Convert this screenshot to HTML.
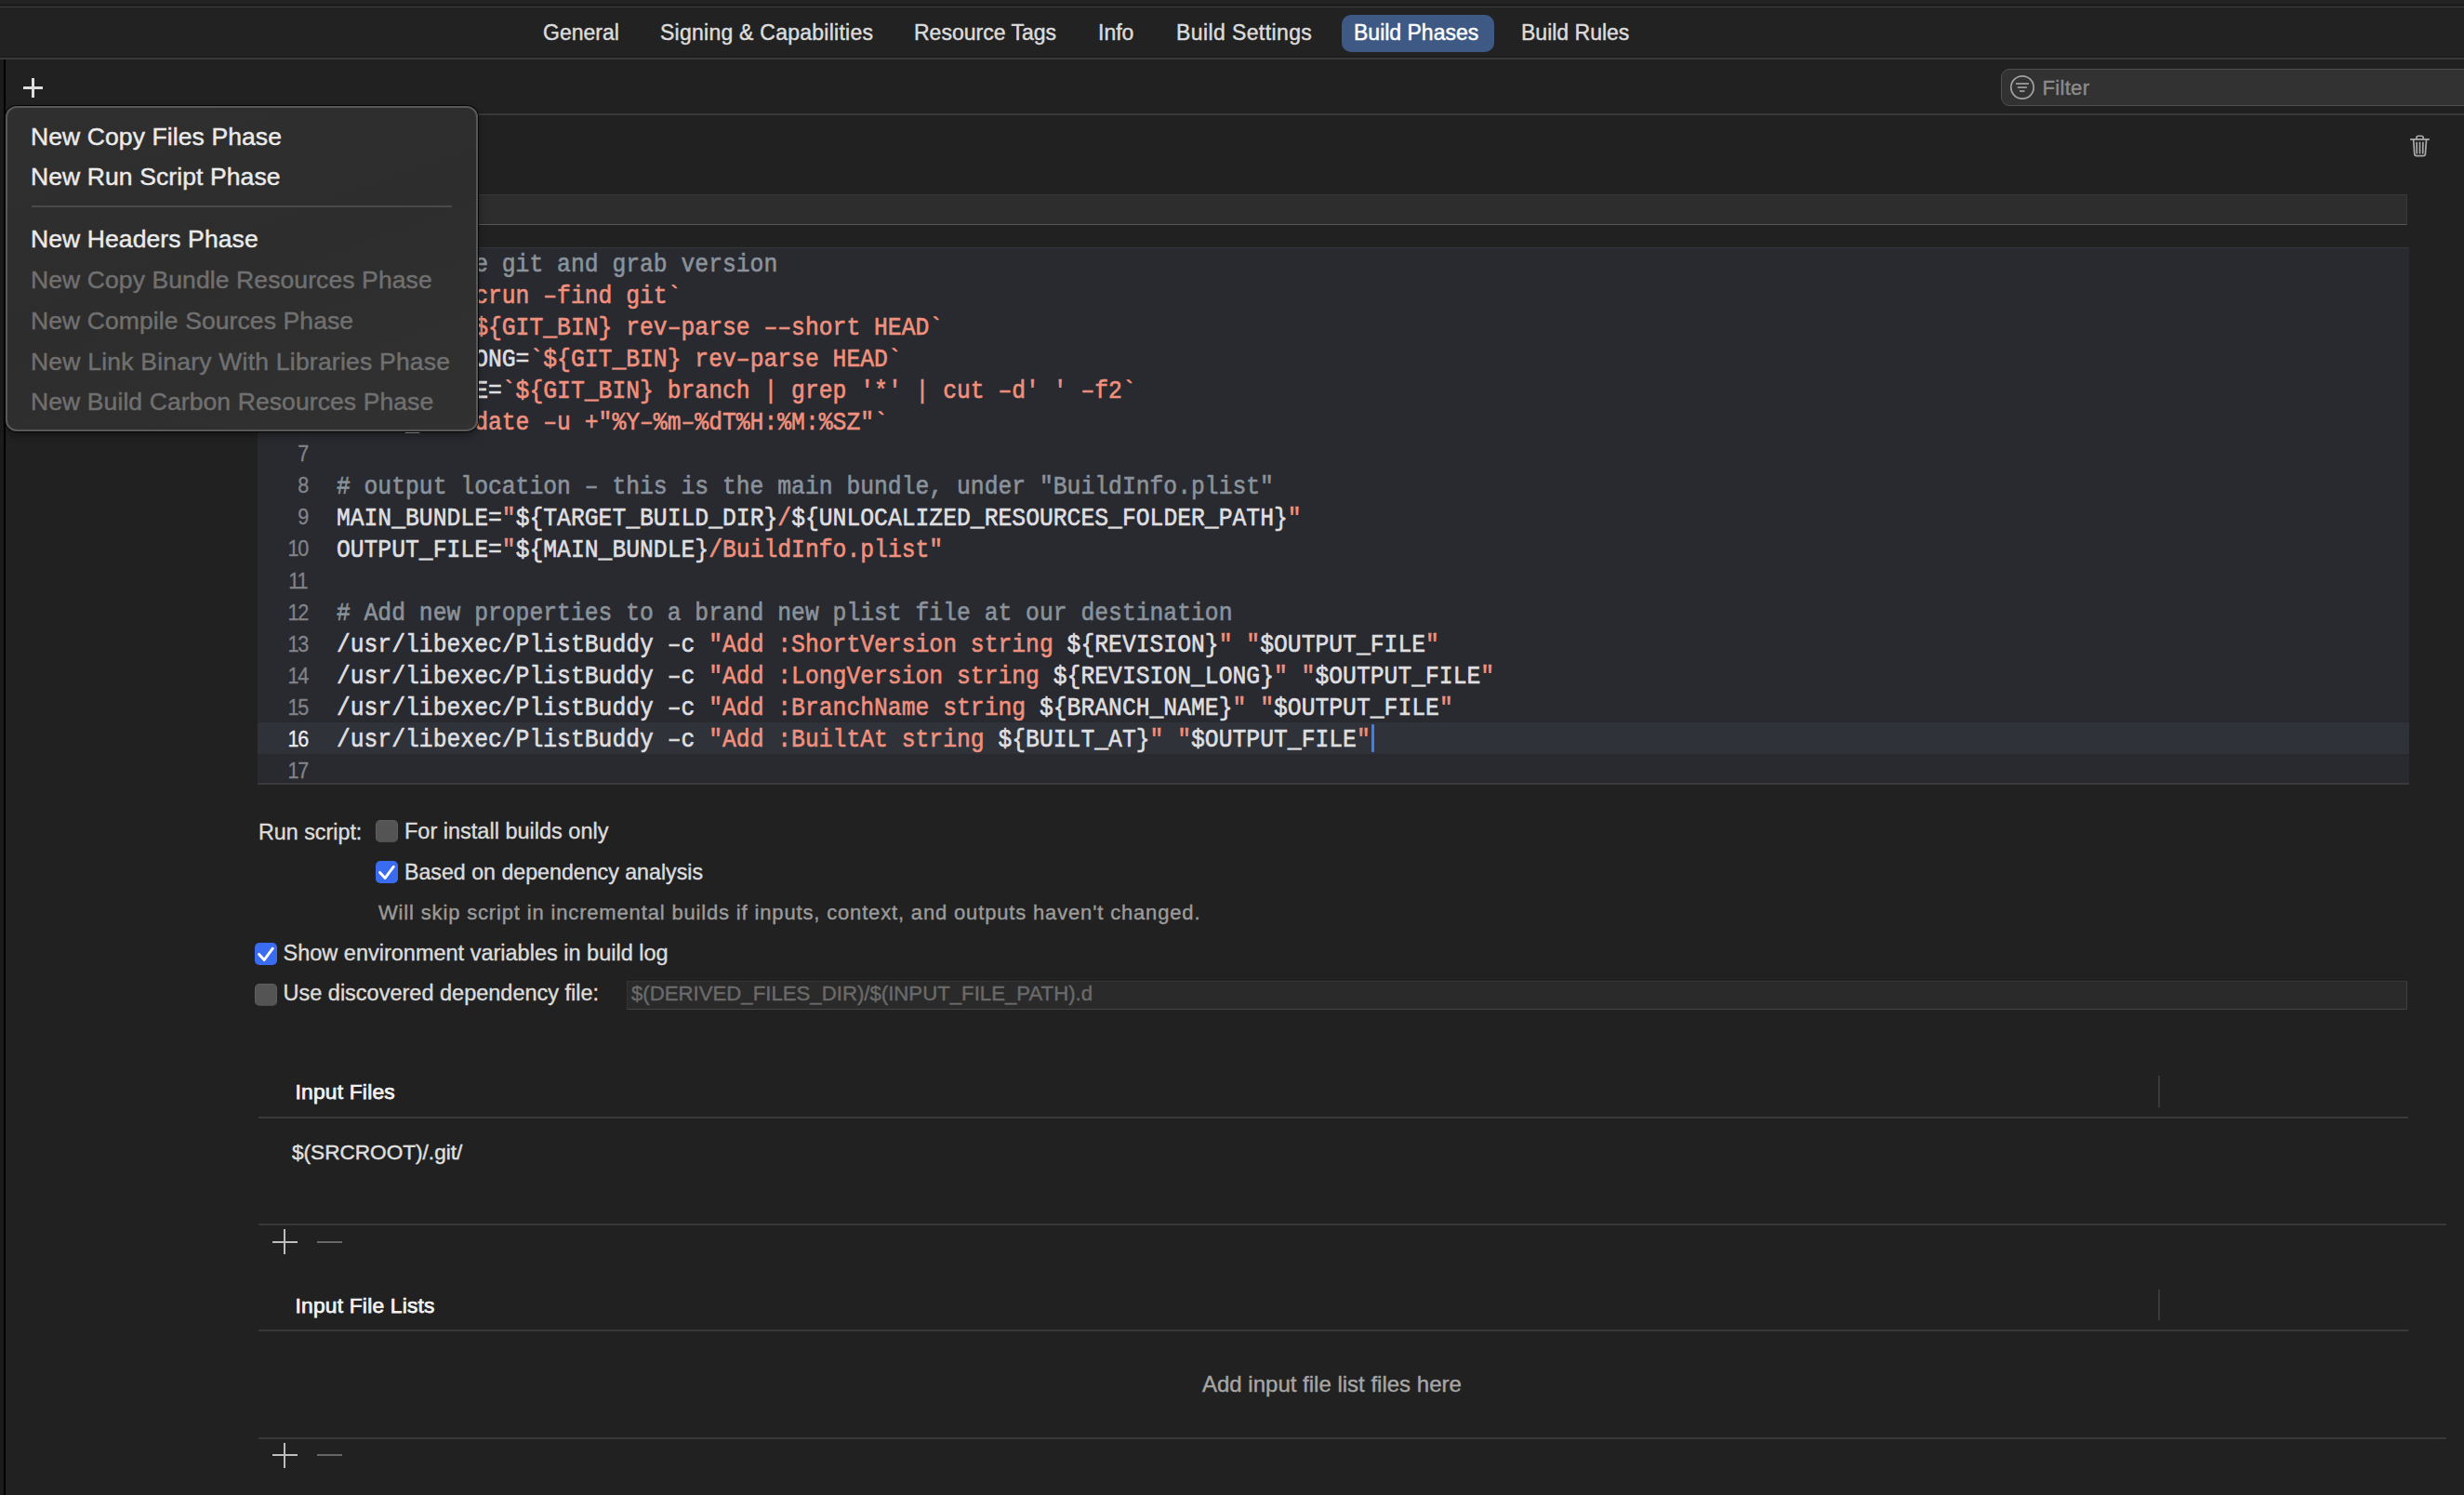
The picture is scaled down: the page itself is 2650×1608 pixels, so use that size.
<!DOCTYPE html>
<html><head><meta charset="utf-8"><style>
html,body{margin:0;padding:0;}
body{width:2650px;height:1608px;position:relative;overflow:hidden;background:#212121;font-family:'Liberation Sans', sans-serif;}
</style></head><body>
<div style="position:absolute;left:0px;top:0px;width:2650px;height:4px;background:#232323"></div>
<div style="position:absolute;left:0px;top:4px;width:2650px;height:3px;background:#1d1d1d"></div>
<div style="position:absolute;left:0px;top:7px;width:2650px;height:1.2px;background:#3e3e3e"></div>
<div style="position:absolute;left:0px;top:8px;width:2650px;height:54px;background:#222222"></div>
<div style="position:absolute;left:0px;top:60px;width:2650px;height:2px;background:#1f1f1f"></div>
<div style="position:absolute;left:0px;top:62px;width:2650px;height:2px;background:#393939"></div>
<div style="position:absolute;left:0px;top:64px;width:4px;height:1544px;background:#1c1c1c"></div>
<div style="position:absolute;left:4px;top:64px;width:2px;height:1544px;background:#000"></div>
<div style="position:absolute;left:6px;top:122px;width:2644px;height:2px;background:#393939"></div>
<div style="position:absolute;left:1443px;top:16px;width:164px;height:40px;background:#3e5a84;border-radius:10px"></div>
<div style="position:absolute;left:584px;top:20.03px;height:30px;line-height:30px;font-family:'Liberation Sans', sans-serif;font-size:23px;font-weight:400;color:#dcdcdc;white-space:pre;-webkit-text-stroke:0.45px currentColor;letter-spacing:0px;">General</div>
<div style="position:absolute;left:710px;top:20.03px;height:30px;line-height:30px;font-family:'Liberation Sans', sans-serif;font-size:23px;font-weight:400;color:#dcdcdc;white-space:pre;-webkit-text-stroke:0.45px currentColor;letter-spacing:0.25px;">Signing &amp; Capabilities</div>
<div style="position:absolute;left:983px;top:20.03px;height:30px;line-height:30px;font-family:'Liberation Sans', sans-serif;font-size:23px;font-weight:400;color:#dcdcdc;white-space:pre;-webkit-text-stroke:0.45px currentColor;letter-spacing:0px;">Resource Tags</div>
<div style="position:absolute;left:1181px;top:20.03px;height:30px;line-height:30px;font-family:'Liberation Sans', sans-serif;font-size:23px;font-weight:400;color:#dcdcdc;white-space:pre;-webkit-text-stroke:0.45px currentColor;letter-spacing:0px;">Info</div>
<div style="position:absolute;left:1265px;top:20.03px;height:30px;line-height:30px;font-family:'Liberation Sans', sans-serif;font-size:23px;font-weight:400;color:#dcdcdc;white-space:pre;-webkit-text-stroke:0.45px currentColor;letter-spacing:0.4px;">Build Settings</div>
<div style="position:absolute;left:1456px;top:20.03px;height:30px;line-height:30px;font-family:'Liberation Sans', sans-serif;font-size:23px;font-weight:400;color:#ffffff;white-space:pre;-webkit-text-stroke:0.45px currentColor;letter-spacing:0px;">Build Phases</div>
<div style="position:absolute;left:1636px;top:20.03px;height:30px;line-height:30px;font-family:'Liberation Sans', sans-serif;font-size:23px;font-weight:400;color:#dcdcdc;white-space:pre;-webkit-text-stroke:0.45px currentColor;letter-spacing:0px;">Build Rules</div>
<div style="position:absolute;left:24.5px;top:93.3px;width:21.5px;height:2.4px;background:#dedede"></div>
<div style="position:absolute;left:34.3px;top:84px;width:2.4px;height:21px;background:#dedede"></div>
<div style="position:absolute;left:2152px;top:74px;width:520px;height:40px;box-sizing:border-box;background:#323232;border:1.5px solid #4f4f4f;border-radius:9px"></div>
<svg style="position:absolute;left:2160px;top:79px" width="30" height="30" viewBox="0 0 30 30">
<circle cx="15" cy="15" r="12.2" fill="none" stroke="#a2a2a2" stroke-width="1.7"/>
<line x1="8" y1="11" x2="22" y2="11" stroke="#a2a2a2" stroke-width="1.7"/>
<line x1="9.8" y1="15" x2="19.8" y2="15" stroke="#a2a2a2" stroke-width="1.7"/>
<line x1="12" y1="19" x2="17.5" y2="19" stroke="#a2a2a2" stroke-width="1.7"/>
</svg>
<div style="position:absolute;left:2196.5px;top:80.10px;height:29px;line-height:29px;font-family:'Liberation Sans', sans-serif;font-size:22.2px;font-weight:400;color:#8c8c8c;white-space:pre;-webkit-text-stroke:0.4px currentColor;letter-spacing:0.25px;">Filter</div>
<svg style="position:absolute;left:2588px;top:142px" width="30" height="30" viewBox="0 0 30 30">
<g fill="none" stroke="#a9a9a9" stroke-width="1.7" stroke-linecap="round" stroke-linejoin="round">
<line x1="4.8" y1="7.9" x2="24.2" y2="7.9"/>
<path d="M10.9 7.6 V6.3 Q10.9 4.25 12.9 4.25 H16.2 Q18.2 4.25 18.2 6.3 V7.6"/>
<path d="M7.65 8.3 L8.75 23.6 Q8.9 25.55 10.9 25.55 H18.3 Q20.25 25.55 20.4 23.6 L21.55 8.3"/>
<line x1="11.1" y1="11.3" x2="11.3" y2="22.8"/>
<line x1="14.5" y1="11.3" x2="14.5" y2="22.8"/>
<line x1="17.9" y1="11.3" x2="17.7" y2="22.8"/>
</g></svg>
<div style="position:absolute;left:400px;top:209px;width:2189px;height:33px;box-sizing:border-box;background:#2d2d2d;border:1px solid #383838;border-bottom:1.5px solid #575757"></div>
<div style="position:absolute;left:277px;top:266px;width:2314px;height:578px;background:#292a30;box-sizing:border-box;border-top:1px solid #34353a;border-bottom:2px solid #3a3a3d"></div>
<div style="position:absolute;left:277px;top:776.5000000000001px;width:2314px;height:34.7px;background:#2f3239"></div>
<div style="position:absolute;right:2319.2px;top:267.58px;height:31px;line-height:31px;font-family:'Liberation Sans', sans-serif;font-size:24px;font-weight:400;color:#838387;white-space:pre;-webkit-text-stroke:0.3px currentColor;letter-spacing:-1.2px;transform:scaleX(0.9);transform-origin:100% 50%;">1</div>
<div style="position:absolute;left:361.9px;top:268.82px;height:32px;line-height:32px;font-family:'Liberation Mono', monospace;font-size:24.71px;font-weight:400;color:#dfdfe0;white-space:pre;-webkit-text-stroke:0.55px currentColor;transform:scaleY(1.14);transform-origin:0 22.58px;"><span style="color:#8a939b"># Determine git and grab version</span></div>
<div style="position:absolute;right:2319.2px;top:301.68px;height:31px;line-height:31px;font-family:'Liberation Sans', sans-serif;font-size:24px;font-weight:400;color:#838387;white-space:pre;-webkit-text-stroke:0.3px currentColor;letter-spacing:-1.2px;transform:scaleX(0.9);transform-origin:100% 50%;">2</div>
<div style="position:absolute;left:361.9px;top:302.92px;height:32px;line-height:32px;font-family:'Liberation Mono', monospace;font-size:24.71px;font-weight:400;color:#dfdfe0;white-space:pre;-webkit-text-stroke:0.55px currentColor;transform:scaleY(1.14);transform-origin:0 22.58px;"><span style="color:#dfdfe0">GIT_BIN=</span><span style="color:#f0917f">`xcrun &#8211;find git`</span></div>
<div style="position:absolute;right:2319.2px;top:335.78px;height:31px;line-height:31px;font-family:'Liberation Sans', sans-serif;font-size:24px;font-weight:400;color:#838387;white-space:pre;-webkit-text-stroke:0.3px currentColor;letter-spacing:-1.2px;transform:scaleX(0.9);transform-origin:100% 50%;">3</div>
<div style="position:absolute;left:361.9px;top:337.02px;height:32px;line-height:32px;font-family:'Liberation Mono', monospace;font-size:24.71px;font-weight:400;color:#dfdfe0;white-space:pre;-webkit-text-stroke:0.55px currentColor;transform:scaleY(1.14);transform-origin:0 22.58px;"><span style="color:#dfdfe0">REVISION=</span><span style="color:#f0917f">`${GIT_BIN} rev&#8211;parse &#8211;&#8211;short HEAD`</span></div>
<div style="position:absolute;right:2319.2px;top:369.88px;height:31px;line-height:31px;font-family:'Liberation Sans', sans-serif;font-size:24px;font-weight:400;color:#838387;white-space:pre;-webkit-text-stroke:0.3px currentColor;letter-spacing:-1.2px;transform:scaleX(0.9);transform-origin:100% 50%;">4</div>
<div style="position:absolute;left:361.9px;top:371.12px;height:32px;line-height:32px;font-family:'Liberation Mono', monospace;font-size:24.71px;font-weight:400;color:#dfdfe0;white-space:pre;-webkit-text-stroke:0.55px currentColor;transform:scaleY(1.14);transform-origin:0 22.58px;"><span style="color:#dfdfe0">REVISION_LONG=</span><span style="color:#f0917f">`${GIT_BIN} rev&#8211;parse HEAD`</span></div>
<div style="position:absolute;right:2319.2px;top:403.98px;height:31px;line-height:31px;font-family:'Liberation Sans', sans-serif;font-size:24px;font-weight:400;color:#838387;white-space:pre;-webkit-text-stroke:0.3px currentColor;letter-spacing:-1.2px;transform:scaleX(0.9);transform-origin:100% 50%;">5</div>
<div style="position:absolute;left:361.9px;top:405.22px;height:32px;line-height:32px;font-family:'Liberation Mono', monospace;font-size:24.71px;font-weight:400;color:#dfdfe0;white-space:pre;-webkit-text-stroke:0.55px currentColor;transform:scaleY(1.14);transform-origin:0 22.58px;"><span style="color:#dfdfe0">BRANCH_NAME=</span><span style="color:#f0917f">`${GIT_BIN} branch | grep &#x27;*&#x27; | cut &#8211;d&#x27; &#x27; &#8211;f2`</span></div>
<div style="position:absolute;right:2319.2px;top:438.08px;height:31px;line-height:31px;font-family:'Liberation Sans', sans-serif;font-size:24px;font-weight:400;color:#838387;white-space:pre;-webkit-text-stroke:0.3px currentColor;letter-spacing:-1.2px;transform:scaleX(0.9);transform-origin:100% 50%;">6</div>
<div style="position:absolute;left:361.9px;top:439.32px;height:32px;line-height:32px;font-family:'Liberation Mono', monospace;font-size:24.71px;font-weight:400;color:#dfdfe0;white-space:pre;-webkit-text-stroke:0.55px currentColor;transform:scaleY(1.14);transform-origin:0 22.58px;"><span style="color:#dfdfe0">BUILT_AT=</span><span style="color:#f0917f">`date &#8211;u +&quot;%Y&#8211;%m&#8211;%dT%H:%M:%SZ&quot;`</span></div>
<div style="position:absolute;right:2319.2px;top:472.18px;height:31px;line-height:31px;font-family:'Liberation Sans', sans-serif;font-size:24px;font-weight:400;color:#838387;white-space:pre;-webkit-text-stroke:0.3px currentColor;letter-spacing:-1.2px;transform:scaleX(0.9);transform-origin:100% 50%;">7</div>
<div style="position:absolute;right:2319.2px;top:506.28px;height:31px;line-height:31px;font-family:'Liberation Sans', sans-serif;font-size:24px;font-weight:400;color:#838387;white-space:pre;-webkit-text-stroke:0.3px currentColor;letter-spacing:-1.2px;transform:scaleX(0.9);transform-origin:100% 50%;">8</div>
<div style="position:absolute;left:361.9px;top:507.52px;height:32px;line-height:32px;font-family:'Liberation Mono', monospace;font-size:24.71px;font-weight:400;color:#dfdfe0;white-space:pre;-webkit-text-stroke:0.55px currentColor;transform:scaleY(1.14);transform-origin:0 22.58px;"><span style="color:#8a939b"># output location &#8211; this is the main bundle, under &quot;BuildInfo.plist&quot;</span></div>
<div style="position:absolute;right:2319.2px;top:540.38px;height:31px;line-height:31px;font-family:'Liberation Sans', sans-serif;font-size:24px;font-weight:400;color:#838387;white-space:pre;-webkit-text-stroke:0.3px currentColor;letter-spacing:-1.2px;transform:scaleX(0.9);transform-origin:100% 50%;">9</div>
<div style="position:absolute;left:361.9px;top:541.62px;height:32px;line-height:32px;font-family:'Liberation Mono', monospace;font-size:24.71px;font-weight:400;color:#dfdfe0;white-space:pre;-webkit-text-stroke:0.55px currentColor;transform:scaleY(1.14);transform-origin:0 22.58px;"><span style="color:#dfdfe0">MAIN_BUNDLE=</span><span style="color:#f0917f">&quot;</span><span style="color:#dfdfe0">${TARGET_BUILD_DIR}</span><span style="color:#f0917f">/</span><span style="color:#dfdfe0">${UNLOCALIZED_RESOURCES_FOLDER_PATH}</span><span style="color:#f0917f">&quot;</span></div>
<div style="position:absolute;right:2319.2px;top:574.48px;height:31px;line-height:31px;font-family:'Liberation Sans', sans-serif;font-size:24px;font-weight:400;color:#838387;white-space:pre;-webkit-text-stroke:0.3px currentColor;letter-spacing:-1.2px;transform:scaleX(0.9);transform-origin:100% 50%;">10</div>
<div style="position:absolute;left:361.9px;top:575.72px;height:32px;line-height:32px;font-family:'Liberation Mono', monospace;font-size:24.71px;font-weight:400;color:#dfdfe0;white-space:pre;-webkit-text-stroke:0.55px currentColor;transform:scaleY(1.14);transform-origin:0 22.58px;"><span style="color:#dfdfe0">OUTPUT_FILE=</span><span style="color:#f0917f">&quot;</span><span style="color:#dfdfe0">${MAIN_BUNDLE}</span><span style="color:#f0917f">/BuildInfo.plist&quot;</span></div>
<div style="position:absolute;right:2319.2px;top:608.58px;height:31px;line-height:31px;font-family:'Liberation Sans', sans-serif;font-size:24px;font-weight:400;color:#838387;white-space:pre;-webkit-text-stroke:0.3px currentColor;letter-spacing:-1.2px;transform:scaleX(0.9);transform-origin:100% 50%;">11</div>
<div style="position:absolute;right:2319.2px;top:642.68px;height:31px;line-height:31px;font-family:'Liberation Sans', sans-serif;font-size:24px;font-weight:400;color:#838387;white-space:pre;-webkit-text-stroke:0.3px currentColor;letter-spacing:-1.2px;transform:scaleX(0.9);transform-origin:100% 50%;">12</div>
<div style="position:absolute;left:361.9px;top:643.92px;height:32px;line-height:32px;font-family:'Liberation Mono', monospace;font-size:24.71px;font-weight:400;color:#dfdfe0;white-space:pre;-webkit-text-stroke:0.55px currentColor;transform:scaleY(1.14);transform-origin:0 22.58px;"><span style="color:#8a939b"># Add new properties to a brand new plist file at our destination</span></div>
<div style="position:absolute;right:2319.2px;top:676.78px;height:31px;line-height:31px;font-family:'Liberation Sans', sans-serif;font-size:24px;font-weight:400;color:#838387;white-space:pre;-webkit-text-stroke:0.3px currentColor;letter-spacing:-1.2px;transform:scaleX(0.9);transform-origin:100% 50%;">13</div>
<div style="position:absolute;left:361.9px;top:678.02px;height:32px;line-height:32px;font-family:'Liberation Mono', monospace;font-size:24.71px;font-weight:400;color:#dfdfe0;white-space:pre;-webkit-text-stroke:0.55px currentColor;transform:scaleY(1.14);transform-origin:0 22.58px;"><span style="color:#dfdfe0">/usr/libexec/PlistBuddy &#8211;c </span><span style="color:#f0917f">&quot;Add :ShortVersion string </span><span style="color:#dfdfe0">${REVISION}</span><span style="color:#f0917f">&quot; &quot;</span><span style="color:#dfdfe0">$OUTPUT_FILE</span><span style="color:#f0917f">&quot;</span></div>
<div style="position:absolute;right:2319.2px;top:710.88px;height:31px;line-height:31px;font-family:'Liberation Sans', sans-serif;font-size:24px;font-weight:400;color:#838387;white-space:pre;-webkit-text-stroke:0.3px currentColor;letter-spacing:-1.2px;transform:scaleX(0.9);transform-origin:100% 50%;">14</div>
<div style="position:absolute;left:361.9px;top:712.12px;height:32px;line-height:32px;font-family:'Liberation Mono', monospace;font-size:24.71px;font-weight:400;color:#dfdfe0;white-space:pre;-webkit-text-stroke:0.55px currentColor;transform:scaleY(1.14);transform-origin:0 22.58px;"><span style="color:#dfdfe0">/usr/libexec/PlistBuddy &#8211;c </span><span style="color:#f0917f">&quot;Add :LongVersion string </span><span style="color:#dfdfe0">${REVISION_LONG}</span><span style="color:#f0917f">&quot; &quot;</span><span style="color:#dfdfe0">$OUTPUT_FILE</span><span style="color:#f0917f">&quot;</span></div>
<div style="position:absolute;right:2319.2px;top:744.98px;height:31px;line-height:31px;font-family:'Liberation Sans', sans-serif;font-size:24px;font-weight:400;color:#838387;white-space:pre;-webkit-text-stroke:0.3px currentColor;letter-spacing:-1.2px;transform:scaleX(0.9);transform-origin:100% 50%;">15</div>
<div style="position:absolute;left:361.9px;top:746.22px;height:32px;line-height:32px;font-family:'Liberation Mono', monospace;font-size:24.71px;font-weight:400;color:#dfdfe0;white-space:pre;-webkit-text-stroke:0.55px currentColor;transform:scaleY(1.14);transform-origin:0 22.58px;"><span style="color:#dfdfe0">/usr/libexec/PlistBuddy &#8211;c </span><span style="color:#f0917f">&quot;Add :BranchName string </span><span style="color:#dfdfe0">${BRANCH_NAME}</span><span style="color:#f0917f">&quot; &quot;</span><span style="color:#dfdfe0">$OUTPUT_FILE</span><span style="color:#f0917f">&quot;</span></div>
<div style="position:absolute;right:2319.2px;top:779.08px;height:31px;line-height:31px;font-family:'Liberation Sans', sans-serif;font-size:24px;font-weight:400;color:#ececec;white-space:pre;-webkit-text-stroke:0.3px currentColor;letter-spacing:-1.2px;transform:scaleX(0.9);transform-origin:100% 50%;">16</div>
<div style="position:absolute;left:361.9px;top:780.32px;height:32px;line-height:32px;font-family:'Liberation Mono', monospace;font-size:24.71px;font-weight:400;color:#dfdfe0;white-space:pre;-webkit-text-stroke:0.55px currentColor;transform:scaleY(1.14);transform-origin:0 22.58px;"><span style="color:#dfdfe0">/usr/libexec/PlistBuddy &#8211;c </span><span style="color:#f0917f">&quot;Add :BuiltAt string </span><span style="color:#dfdfe0">${BUILT_AT}</span><span style="color:#f0917f">&quot; &quot;</span><span style="color:#dfdfe0">$OUTPUT_FILE</span><span style="color:#f0917f">&quot;</span></div>
<div style="position:absolute;right:2319.2px;top:813.18px;height:31px;line-height:31px;font-family:'Liberation Sans', sans-serif;font-size:24px;font-weight:400;color:#838387;white-space:pre;-webkit-text-stroke:0.3px currentColor;letter-spacing:-1.2px;transform:scaleX(0.9);transform-origin:100% 50%;">17</div>
<div style="position:absolute;left:1474.5px;top:779px;width:3px;height:30px;background:#3f7ff6;border-radius:1px"></div>
<div style="position:absolute;left:278px;top:879.52px;height:30px;line-height:30px;font-family:'Liberation Sans', sans-serif;font-size:23.3px;font-weight:400;color:#dcdcdc;white-space:pre;-webkit-text-stroke:0.4px currentColor;">Run script:</div>
<div style="position:absolute;left:404px;top:882px;width:24px;height:24px;box-sizing:border-box;border-radius:5px;background:#545454;border:1px solid #5e5e5e;border-bottom-color:#4c4c4c"></div>
<div style="position:absolute;left:435px;top:878.95px;height:31px;line-height:31px;font-family:'Liberation Sans', sans-serif;font-size:23.5px;font-weight:400;color:#dcdcdc;white-space:pre;-webkit-text-stroke:0.4px currentColor;">For install builds only</div>
<div style="position:absolute;left:404px;top:926px;width:24px;height:24px;border-radius:5px;background:#3a6cf2"></div>
<svg style="position:absolute;left:404px;top:926px" width="24" height="24" viewBox="0 0 24 24"><path d="M4.6 12.4 L10.2 18.4 L19.3 6.2" fill="none" stroke="#ffffff" stroke-width="2.9" stroke-linecap="round" stroke-linejoin="round"/></svg>
<div style="position:absolute;left:435px;top:922.66px;height:30px;line-height:30px;font-family:'Liberation Sans', sans-serif;font-size:23.2px;font-weight:400;color:#dcdcdc;white-space:pre;-webkit-text-stroke:0.4px currentColor;">Based on dependency analysis</div>
<div style="position:absolute;left:407px;top:966.87px;height:29px;line-height:29px;font-family:'Liberation Sans', sans-serif;font-size:22px;font-weight:400;color:#9b9b9b;white-space:pre;-webkit-text-stroke:0.4px currentColor;letter-spacing:0.84px;">Will skip script in incremental builds if inputs, context, and outputs haven&#x27;t changed.</div>
<div style="position:absolute;left:274px;top:1014px;width:24px;height:24px;border-radius:5px;background:#3a6cf2"></div>
<svg style="position:absolute;left:274px;top:1014px" width="24" height="24" viewBox="0 0 24 24"><path d="M4.6 12.4 L10.2 18.4 L19.3 6.2" fill="none" stroke="#ffffff" stroke-width="2.9" stroke-linecap="round" stroke-linejoin="round"/></svg>
<div style="position:absolute;left:304.5px;top:1009.75px;height:31px;line-height:31px;font-family:'Liberation Sans', sans-serif;font-size:23.5px;font-weight:400;color:#dcdcdc;white-space:pre;-webkit-text-stroke:0.4px currentColor;">Show environment variables in build log</div>
<div style="position:absolute;left:274px;top:1058px;width:24px;height:24px;box-sizing:border-box;border-radius:5px;background:#545454;border:1px solid #5e5e5e;border-bottom-color:#4c4c4c"></div>
<div style="position:absolute;left:304.5px;top:1053.05px;height:31px;line-height:31px;font-family:'Liberation Sans', sans-serif;font-size:23.5px;font-weight:400;color:#dcdcdc;white-space:pre;-webkit-text-stroke:0.4px currentColor;">Use discovered dependency file:</div>
<div style="position:absolute;left:674px;top:1054.5px;width:1915px;height:31.5px;box-sizing:border-box;background:#2a2a2a;border:1px solid #353535;border-right-color:#3e3e3e;border-bottom:1.5px solid #444444"></div>
<div style="position:absolute;left:679px;top:1054.30px;height:29px;line-height:29px;font-family:'Liberation Sans', sans-serif;font-size:22.2px;font-weight:400;color:#6a6a6a;white-space:pre;-webkit-text-stroke:0.4px currentColor;">$(DERIVED_FILES_DIR)/$(INPUT_FILE_PATH).d</div>
<div style="position:absolute;left:317.5px;top:1159.00px;height:30px;line-height:30px;font-family:'Liberation Sans', sans-serif;font-size:22.8px;font-weight:400;color:#f2f2f2;white-space:pre;-webkit-text-stroke:0.75px currentColor;letter-spacing:0.2px;">Input Files</div>
<div style="position:absolute;left:2321px;top:1157px;width:2px;height:34px;background:#3a3a3a"></div>
<div style="position:absolute;left:278px;top:1200.5px;width:2312px;height:2px;background:#393939"></div>
<div style="position:absolute;left:314px;top:1224.56px;height:29px;line-height:29px;font-family:'Liberation Sans', sans-serif;font-size:22.6px;font-weight:400;color:#e0e0e0;white-space:pre;-webkit-text-stroke:0.4px currentColor;">$(SRCROOT)/.git/</div>
<div style="position:absolute;left:278px;top:1315.5px;width:2353px;height:2px;background:#393939"></div>
<div style="position:absolute;left:292.8px;top:1334.5px;width:27px;height:2.4px;background:#bdbdbd"></div>
<div style="position:absolute;left:305px;top:1322.4px;width:2.4px;height:26.6px;background:#bdbdbd"></div>
<div style="position:absolute;left:341.3px;top:1334.5px;width:26.6px;height:2.4px;background:#666666"></div>
<div style="position:absolute;left:317.5px;top:1389.00px;height:30px;line-height:30px;font-family:'Liberation Sans', sans-serif;font-size:22.8px;font-weight:400;color:#f2f2f2;white-space:pre;-webkit-text-stroke:0.75px currentColor;letter-spacing:0.2px;">Input File Lists</div>
<div style="position:absolute;left:2321px;top:1387px;width:2px;height:33px;background:#3a3a3a"></div>
<div style="position:absolute;left:278px;top:1429.5px;width:2312px;height:2px;background:#393939"></div>
<div style="position:absolute;left:1293px;top:1472.93px;height:31px;line-height:31px;font-family:'Liberation Sans', sans-serif;font-size:24px;font-weight:400;color:#a6a6a6;white-space:pre;-webkit-text-stroke:0.4px currentColor;">Add input file list files here</div>
<div style="position:absolute;left:278px;top:1546px;width:2353px;height:2px;background:#393939"></div>
<div style="position:absolute;left:292.8px;top:1564.1px;width:27px;height:2.4px;background:#bdbdbd"></div>
<div style="position:absolute;left:305px;top:1552.0px;width:2.4px;height:26.6px;background:#bdbdbd"></div>
<div style="position:absolute;left:341.3px;top:1564.1px;width:26.6px;height:2.4px;background:#666666"></div>
<div style="position:absolute;left:6px;top:114px;width:508px;height:350px;box-sizing:border-box;border-radius:12px;background:linear-gradient(160deg,#2f2f2f,#2d2d2d 50%,#313131);border:2px solid #585858;box-shadow:0 0 0 1px #050505, 0 4px 10px rgba(0,0,0,0.4)"></div>
<div style="position:absolute;left:33px;top:129.81px;height:34px;line-height:34px;font-family:'Liberation Sans', sans-serif;font-size:26.5px;font-weight:400;color:#ebebeb;white-space:pre;-webkit-text-stroke:0.45px currentColor;letter-spacing:0.1px;">New Copy Files Phase</div>
<div style="position:absolute;left:33px;top:173.41px;height:34px;line-height:34px;font-family:'Liberation Sans', sans-serif;font-size:26.5px;font-weight:400;color:#ebebeb;white-space:pre;-webkit-text-stroke:0.45px currentColor;letter-spacing:0.1px;">New Run Script Phase</div>
<div style="position:absolute;left:33px;top:239.51px;height:34px;line-height:34px;font-family:'Liberation Sans', sans-serif;font-size:26.5px;font-weight:400;color:#ebebeb;white-space:pre;-webkit-text-stroke:0.45px currentColor;letter-spacing:0.1px;">New Headers Phase</div>
<div style="position:absolute;left:33px;top:283.91px;height:34px;line-height:34px;font-family:'Liberation Sans', sans-serif;font-size:26.5px;font-weight:400;color:#707070;white-space:pre;-webkit-text-stroke:0.45px currentColor;letter-spacing:0.1px;">New Copy Bundle Resources Phase</div>
<div style="position:absolute;left:33px;top:328.21px;height:34px;line-height:34px;font-family:'Liberation Sans', sans-serif;font-size:26.5px;font-weight:400;color:#707070;white-space:pre;-webkit-text-stroke:0.45px currentColor;letter-spacing:0.1px;">New Compile Sources Phase</div>
<div style="position:absolute;left:33px;top:371.51px;height:34px;line-height:34px;font-family:'Liberation Sans', sans-serif;font-size:26.5px;font-weight:400;color:#707070;white-space:pre;-webkit-text-stroke:0.45px currentColor;letter-spacing:0.22px;">New Link Binary With Libraries Phase</div>
<div style="position:absolute;left:33px;top:415.21px;height:34px;line-height:34px;font-family:'Liberation Sans', sans-serif;font-size:26.5px;font-weight:400;color:#707070;white-space:pre;-webkit-text-stroke:0.45px currentColor;letter-spacing:0.1px;">New Build Carbon Resources Phase</div>
<div style="position:absolute;left:33.5px;top:221.4px;width:452px;height:2px;background:#4a4a4a"></div>
</body></html>
